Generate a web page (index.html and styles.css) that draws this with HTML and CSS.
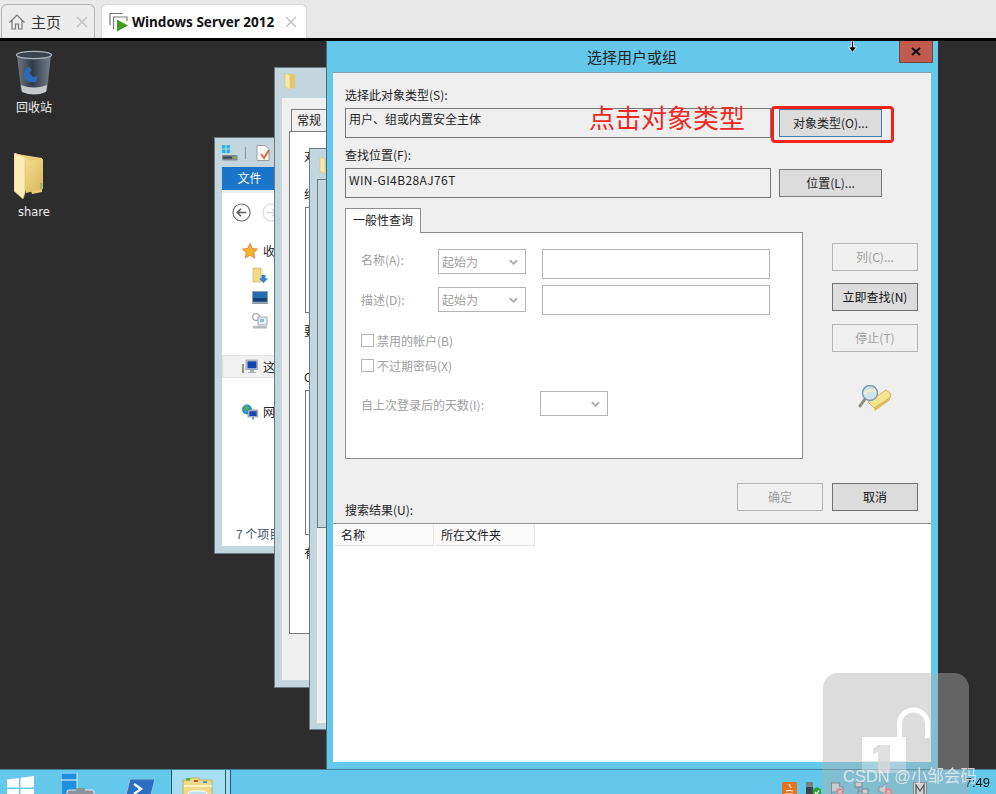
FILE: index.html
```html
<!DOCTYPE html>
<html lang="zh-CN">
<head>
<meta charset="utf-8">
<title>选择用户或组</title>
<link rel="stylesheet" href="styles.css">
</head>
<body>
<div class="screen">
  <header class="tabbar">
    <div class="tab tab-home">
      <svg class="home-icon" viewBox="0 0 18 18" width="18" height="18"><path d="M1.5 9.5 9 2l7.500 7.500M4 7.500V16h3.500v-5h3v5H14V7.500" fill="none" stroke="#777" stroke-width="1.200"/></svg>
      <span class="tab-home-label">主页</span>
      <svg class="tab-close" viewBox="0 0 14 14" width="14" height="14"><path d="M2 2l10 10M12 2 2 12" stroke="#c4c4c4" stroke-width="1.600"/></svg>
    </div>
    <div class="tab tab-active">
      <svg class="vm-icon" viewBox="0 0 20 20" width="20" height="20"><path d="M1 13V1.500h13M4.500 17V5h13.500v4" fill="none" stroke="#777" stroke-width="1.200"/><path d="M8 7.500 19 13.500 8 19.500z" fill="#3f9c1f"/></svg>
      <span class="tab-title">Windows Server 2012</span>
      <svg class="tab-close" viewBox="0 0 14 14" width="14" height="14"><path d="M2 2l10 10M12 2 2 12" stroke="#c4c4c4" stroke-width="1.600"/></svg>
    </div>
  </header>

  <main class="desktop">
    <div class="desk-icon desk-bin">
      <svg viewBox="0 0 36 46" width="36" height="46">
        <defs><linearGradient id="binBody" x1="0" y1="0" x2="1" y2="0"><stop offset="0" stop-color="#6d7882"/><stop offset=".45" stop-color="#2f3b47"/><stop offset="1" stop-color="#75808a"/></linearGradient></defs>
        <path d="M1 5 5 41q13 6 26 0L35 5z" fill="url(#binBody)"/>
        <path d="M5 35q13 5 26 0l-1 7q-12 5-24 0z" fill="#c6c8ca"/>
        <ellipse cx="18" cy="5" rx="17.500" ry="3.600" fill="#39444e" stroke="#aeb6bc" stroke-width="1.200"/>
        <path d="M8 25q1-8 5-8l3 3-3 3 4 4 5-1-2 6h-7q-5-2-5-7z" fill="#2f68b8"/>
      </svg>
      <span class="desk-label">回收站</span>
    </div>
    <div class="desk-icon desk-share">
      <svg class="share-folder" viewBox="0 0 32 46" width="32" height="46">
        <defs><linearGradient id="fBack" x1="0" y1="0" x2="1" y2="1"><stop offset="0" stop-color="#fbeaa6"/><stop offset="1" stop-color="#d9b659"/></linearGradient></defs>
        <path d="M3 1 28 5v34l-10 2z" fill="#e8cd78"/>
        <path d="M1 0 11 4q3 1 4 4l14-2v30L12 40z" fill="url(#fBack)"/>
        <path d="M0 0 10 3.500q1 0 1 2V40l-2 6-9-8z" fill="#fbeeb4" stroke="#d8bd6e" stroke-width=".6"/>
        <rect x="26" y="30" width="2.500" height="6" fill="#9fb46a"/>
      </svg>
      <span class="desk-label desk-label-latin">share</span>
    </div>

    <section class="win win-explorer">
      <div class="exp-title">
        <svg viewBox="0 0 16 16" width="16" height="16"><path d="M0 0h3.500v3.500H0zM4.500 0H8v3.500H4.500zM0 4.500h3.500V8H0zM4.500 4.500H8V8H4.500z" fill="#2ab4ea"/><rect y="10" width="15.500" height="5.500" rx="1" fill="#7e8a90"/><rect x="1" y="11.500" width="9" height="2.200" fill="#3f4a50"/><rect x="11.500" y="11.500" width="3" height="2.200" fill="#79bd3a"/></svg>
        <span class="exp-sep"></span>
        <svg class="exp-doc" viewBox="0 0 14 16" width="14" height="16"><path d="M1 .5h8l4 4v11H1z" fill="#fbfbfb" stroke="#8b8b8b" stroke-width=".8"/><path d="m5 9 3 4 5-8" fill="none" stroke="#dd6a40" stroke-width="2"/></svg>
      </div>
      <div class="exp-file">文件</div>
      <div class="exp-content">
        <div class="exp-nav">
          <svg viewBox="0 0 20 20" width="19" height="19"><circle cx="10" cy="10" r="9" fill="none" stroke="#6a6a6a" stroke-width="1.200"/><path d="M15 10H6m3.500-4L5.500 10l4 4" fill="none" stroke="#5c5c5c" stroke-width="1.700"/></svg>
          <svg viewBox="0 0 20 20" width="19" height="19"><circle cx="10" cy="10" r="9" fill="none" stroke="#d8d8d8" stroke-width="1.200"/><path d="M5 10h9m-3.500-4 4 4-4 4" fill="none" stroke="#d8d8d8" stroke-width="1.700"/></svg>
        </div>
        <div class="exp-row exp-fav">
          <svg viewBox="0 0 16 16" width="16" height="16"><path d="m8 .5 2.300 5 5.200.6-3.800 3.600 1 5.300L8 12.300 3.300 15l1-5.300L.5 6.100l5.200-.6z" fill="#f5b32e" stroke="#d9752a" stroke-width=".8"/></svg>
          <span class="exp-text">收</span>
        </div>
        <div class="exp-sub exp-sub-first">
          <svg viewBox="0 0 16 16" width="16" height="16"><path d="M1 1h8v14H1z" fill="#f0d987" stroke="#c9ad5b" stroke-width=".6"/><path d="M9 2h2v6H9z" fill="#f5e5a4"/><path d="M9.500 8h4v3.500H16L11.500 16 7 11.500h2.500z" fill="#2f7fd3"/></svg>
        </div>
        <div class="exp-sub">
          <svg viewBox="0 0 16 13" width="16" height="13"><rect width="16" height="13" fill="#8fa0ad"/><rect x="1" y="1" width="14" height="9.500" fill="#2a6cb4"/><rect x="1" y="7" width="14" height="3.500" fill="#163f78"/></svg>
        </div>
        <div class="exp-sub">
          <svg viewBox="0 0 16 16" width="16" height="16"><circle cx="4" cy="4" r="3.500" fill="#fff" stroke="#8c8c8c"/><rect x="6" y="4" width="9" height="8" fill="#e6eef2" stroke="#8c9aa2" stroke-width=".8"/><rect x="8" y="6" width="4" height="3" fill="#8dc0dd"/><rect x="1" y="13" width="14" height="2.500" fill="#b7bec2"/></svg>
        </div>
        <div class="exp-row exp-pc">
          <svg viewBox="0 0 16 16" width="16" height="16"><rect x="4" y="1" width="12" height="9.500" fill="#c7ced4" stroke="#7d8a92" stroke-width=".6"/><rect x="5.500" y="2.300" width="9" height="7" fill="#1345b4"/><path d="M8 11h4v2h2v1H6v-1h2z" fill="#aab3b8"/><rect y="5" width="2" height="9" fill="#8a9a7a"/></svg>
          <span class="exp-text">这</span>
        </div>
        <div class="exp-row exp-net">
          <svg viewBox="0 0 16 16" width="16" height="16"><circle cx="5" cy="5.500" r="5" fill="#2b93d6"/><path d="M2 3q3-2 5 0l-1 3-3 2z" fill="#57b04a"/><rect x="6" y="6" width="10" height="7" fill="#c2ccd2" stroke="#69767e" stroke-width=".6"/><rect x="7.300" y="7.200" width="7.400" height="4.800" fill="#1747b4"/><rect x="10" y="13" width="2" height="2.500" fill="#8d979d"/></svg>
          <span class="exp-text">网</span>
        </div>
        <div class="exp-status">7 个项目</div>
      </div>
    </section>

    <section class="win win-props">
      <svg class="win-folder" viewBox="0 0 14 18" width="14" height="18"><path d="M2 1h9v14H4z" fill="#e3c66f"/><path d="M1 0l5 2v15l-5-3z" fill="#f9e9a6" stroke="#d3b868" stroke-width=".5"/></svg>
      <div class="props-body">
        <div class="props-tab">常规</div>
        <div class="props-pane">
          <p class="props-frag props-a">对</p>
          <p class="props-frag props-b">组</p>
          <div class="props-box props-box1"></div>
          <p class="props-frag props-c">要</p>
          <p class="props-frag props-d">C</p>
          <div class="props-box props-box2"></div>
          <p class="props-frag props-e">有</p>
        </div>
      </div>
    </section>

    <section class="win win-perm">
      <svg class="win-folder win-folder-perm" viewBox="0 0 14 18" width="14" height="18"><path d="M1 0l5 2v15l-5-3z" fill="#f9e9a6" stroke="#d3b868" stroke-width=".5"/></svg>
      <div class="perm-nest"></div>
      <div class="perm-foot"></div>
    </section>

    <section class="win-dialog">
      <div class="dlg-titlebar">
        <span class="dlg-title">选择用户或组</span>
        <div class="dlg-close">
          <svg viewBox="0 0 10 9" width="10" height="9"><path d="M1 1l8 7M9 1 1 8" stroke="#111" stroke-width="2.200"/></svg>
        </div>
      </div>
      <div class="dlg-body">
        <div class="dlg-fields">
          <label class="fld-label">选择此对象类型(S):</label>
          <div class="readonly-box">用户、组或内置安全主体</div>
          <button class="btn btn-focus">对象类型(O)...</button>
          <label class="fld-label fld-label-second">查找位置(F):</label>
          <div class="readonly-box readonly-host">WIN-GI4B28AJ76T</div>
          <button class="btn">位置(L)...</button>
        </div>

        <div class="dlg-middle">
          <div class="query">
            <div class="query-tab">一般性查询</div>
            <div class="query-panel">
              <div class="q-row">
                <span class="q-label">名称(A):</span>
                <div class="combo"><span>起始为</span><svg class="chev" viewBox="0 0 10 7" width="9" height="7"><path d="m1 1 4 4 4-4" fill="none" stroke="#aaa" stroke-width="2"/></svg></div>
                <div class="q-input"></div>
              </div>
              <div class="q-row q-row-second">
                <span class="q-label q-label-tall">描述(D):</span>
                <div class="combo combo-low"><span>起始为</span><svg class="chev" viewBox="0 0 10 7" width="9" height="7"><path d="m1 1 4 4 4-4" fill="none" stroke="#aaa" stroke-width="2"/></svg></div>
                <div class="q-input"></div>
              </div>
              <div class="q-check q-check-first"><span class="checkbox"></span><span>禁用的帐户(B)</span></div>
              <div class="q-check"><span class="checkbox"></span><span>不过期密码(X)</span></div>
              <div class="q-days">
                <span class="q-days-label">自上次登录后的天数(I):</span>
                <div class="combo combo-small"><svg class="chev" viewBox="0 0 10 7" width="9" height="7"><path d="m1 1 4 4 4-4" fill="none" stroke="#aaa" stroke-width="2"/></svg></div>
              </div>
            </div>
          </div>
          <div class="side">
            <button class="btn btn-side btn-disabled">列(C)...</button>
            <button class="btn btn-side btn-primary">立即查找(N)</button>
            <button class="btn btn-side btn-disabled btn-stop">停止(T)</button>
            <svg class="search-icon" viewBox="0 0 34 26" width="34" height="26">
              <path d="M10 17 28 5l5 4-1 4-16 10z" fill="#f4e38f" stroke="#c4a84f" stroke-width=".8"/>
              <path d="M16 23 32 12v3L17 26z" fill="#d8bc5c"/>
              <path d="M7 14 2 21" stroke="#8a8a80" stroke-width="3" stroke-linecap="round"/>
              <circle cx="12" cy="8" r="7.500" fill="#cfe3ea" stroke="#7e98a6" stroke-width="1.400"/>
              <path d="M6 9q6-6 12-2" fill="none" stroke="#f4f0d0" stroke-width="2"/>
            </svg>
          </div>
        </div>

        <div class="dlg-actions">
          <label class="fld-label results-label">搜索结果(U):</label>
          <button class="btn btn-side btn-disabled">确定</button>
          <button class="btn btn-side btn-primary">取消</button>
        </div>

        <div class="results">
          <div class="results-head">
            <span class="col">名称</span>
            <span class="col">所在文件夹</span>
          </div>
        </div>
      </div>

      <div class="note">点击对象类型</div>
      <div class="note-box"></div>
    </section>

    <svg class="cursor" viewBox="0 0 9 12" width="9" height="12"><path d="M3.500 0h2v6h3L4.500 11.500.5 6h3z" fill="#000" stroke="#fff" stroke-width=".8"/></svg>
  </main>

  <footer class="taskbar">
    <svg class="tb-win" viewBox="0 0 28 20" width="28" height="20"><path d="M0 3.500 12 2v9.500H0zM13.500 1.800 27 0v11.500H13.500zM0 13h12v7H0zM13.500 13H27v7H13.500z" fill="#fff"/></svg>
    <svg class="tb-server" viewBox="0 0 34 23" width="34" height="23"><rect x="0" y="0" width="16" height="23" fill="#1f8ede" stroke="#fff" stroke-width=".8"/><path d="M0 7h16" stroke="#fff"/><rect x="6" y="17" width="27" height="8" rx="2" fill="#8b949a" stroke="#e4e8ea"/><rect x="15" y="15" width="9" height="3" fill="#8b949a"/></svg>
    <svg class="tb-ps" viewBox="0 0 30 18" width="30" height="18"><path d="M5 0h25l-5 20H0z" fill="#2a6fc0" stroke="#9bc7e6"/><path d="m9 5 7 5-7 5" fill="none" stroke="#fff" stroke-width="2.400"/></svg>
    <div class="tb-active">
      <svg viewBox="0 0 32 20" width="32" height="20"><path d="M1 4h7l1-2h8l1 2h12v18H1z" fill="#f1d98c" stroke="#c8ad5e"/><rect x="4" y="2" width="4" height="2.500" fill="#4bb04a"/><rect x="12" y="4" width="4" height="2" fill="#c9502f"/><rect x="21" y="5" width="4" height="2" fill="#4aa0c4"/><path d="M2 10h28" stroke="#fbf0c2" stroke-width="2"/><path d="M5 20q2-5 5-5h12q3 0 3 5" fill="#bfe0ee" stroke="#fff"/></svg>
    </div>
    <div class="tb-slice"></div>
    <div class="tray">
      <svg viewBox="0 0 15 14" width="15" height="14"><rect width="15" height="14" rx="1.500" fill="#e8721d"/><path d="M4 9q4-1 7 0M3.500 12h8M7 2l2 4" fill="none" stroke="#fff" stroke-width="1.200"/></svg>
      <svg viewBox="0 0 15 14" width="15" height="14"><rect x="0" y="0" width="7" height="5" fill="#7a7f85"/><rect y="5" width="7" height="9" fill="#3c4248"/><circle cx="11" cy="10" r="4.500" fill="#2ba02f"/><path d="m8.800 10 1.700 1.800 2.700-3.400" fill="none" stroke="#fff" stroke-width="1.200"/></svg>
      <svg viewBox="0 0 15 14" width="15" height="14"><path d="M1.500 0v14M2 1h8l-1 3 4 1v5H2" fill="#dfe4e8" stroke="#65727a"/><circle cx="10" cy="10" r="4" fill="#ec7a80"/><path d="m8.500 8.500 3 3m0-3-3 3" stroke="#fff"/></svg>
      <svg viewBox="0 0 15 14" width="15" height="14"><rect x="1" y="0" width="7" height="5" fill="#dfe8ec" stroke="#59676f"/><rect x="8" y="7" width="6" height="5" fill="#dfe8ec" stroke="#59676f"/><path d="M4 5v8M4 9h4" stroke="#59676f"/></svg>
      <svg class="tray-speaker" viewBox="0 0 15 14" width="15" height="14"><path d="M1 5h3l4-4v13L4 10H1z" fill="#dfe4e8" stroke="#65727a" stroke-width=".8"/><circle cx="10.500" cy="10" r="4" fill="#ec7a80"/><path d="m9 8.500 3 3m0-3-3 3" stroke="#fff"/></svg>
      <svg class="tray-m" viewBox="0 0 14 14" width="14" height="14"><rect x=".5" y=".5" width="13" height="14" fill="#e6eef0" stroke="#6f787c"/><path d="M3 14V3l4 6 4-6v11" fill="none" stroke="#222" stroke-width="1.300"/></svg>
      <span class="tray-time">7:49</span>
    </div>
  </footer>

  <div class="watermark">
    <svg class="wm-lock" viewBox="0 0 70 88" width="70" height="88">
      <path d="M38.500 32V18a14 14 0 0 1 28 0V32" fill="none" stroke="#fff" stroke-width="5"/>
      <rect x="1" y="31" width="44" height="24" fill="#fff"/>
      <rect x="1" y="55" width="44" height="12" fill="#fff" fill-opacity=".3"/>
      <path d="M17 39h12v28H17V46l-5 2v-5z" fill="#d8d8d8" fill-opacity=".8"/>
    </svg>
  </div>
  <div class="wm-text">CSDN @小邹会码</div>
</div>
</body>
</html>
```

FILE: styles.css
```css
* { box-sizing: border-box; }
html, body { margin: 0; padding: 0; height: 100%; overflow: hidden; }
body { font-family: "Noto Sans CJK SC", "Noto Sans", sans-serif; font-size: 12px; color: #222; }
p { margin: 0; }
svg { display: block; flex: none; }

.screen { position: relative; width: 996px; height: 794px; display: flex; flex-direction: column; overflow: hidden; filter: blur(.3px); }

/* browser-like tab bar */
.tabbar { height: 41px; flex: none; display: flex; align-items: flex-end; gap: 6px; padding: 4px 0 0 1px; background: #e8e8e8; border-bottom: 3px solid #000; }
.tab { height: 34px; display: flex; align-items: center; border: 1px solid #b4b4b4; border-bottom: 0; border-radius: 6px 6px 0 0; }
.tab-home { width: 94px; padding-left: 6px; background: #ececec; }
.tab-home-label { margin-left: 5px; font-size: 15px; line-height: 20px; color: #333; }
.tab-home .tab-close { margin-left: 14px; }
.tab-active { width: 206px; padding-left: 7px; background: #fff; border-color: #d8d8d8; }
.tab-title { margin-left: 3px; font-family: "Noto Sans", sans-serif; font-weight: 700; font-size: 13.500px; color: #111; white-space: nowrap; }
.tab-active .tab-close { margin-left: 10px; }

/* desktop */
.desktop { position: relative; flex: 1; background: #2d2d2d; }
.desk-icon { position: absolute; display: flex; flex-direction: column; align-items: center; width: 60px; color: #eee; }
.desk-bin { left: 4px; top: 9px; }
.desk-share { left: 4px; top: 112px; }
.share-folder { margin-right: 8px; }
.desk-label { margin-top: 3px; line-height: 16px; font-size: 12px; }
.desk-label-latin { margin-top: 5px; font-family: "DejaVu Sans", sans-serif; font-size: 11.500px; }

.win { position: absolute; background: #c4d6dd; border: 1px solid #6c7a82; overflow: hidden; }
.win-explorer { left: 214px; top: 96px; width: 62px; height: 417px; padding: 0 0 7px 7px; display: flex; flex-direction: column; }
.exp-title { height: 29px; display: flex; align-items: center; gap: 7px; flex: none; }
.exp-sep { width: 1px; height: 12px; background: #88979e; }
.exp-doc { margin-left: 3px; }
.exp-file { width: 52px; height: 23px; flex: none; padding-left: 3px; background: #1a74c8; color: #fff; line-height: 22px; text-align: center; font-size: 12px; }
.exp-content { flex: 1; background: #fff; border-top: 3px solid #f0f0f0; overflow: hidden; }
.exp-nav { display: flex; gap: 11px; margin: 10px 0 0 10px; }
.exp-row { display: flex; align-items: center; color: #222; }
.exp-fav { margin: 21px 0 0 20px; }
.exp-text { margin-left: 5px; font-size: 12px; line-height: 16px; }
.exp-sub { margin-left: 30px; height: 23px; display: flex; align-items: center; }
.exp-sub-first { margin-top: 4px; }
.exp-pc { margin: 23px 0 0 0; height: 23px; padding-left: 19px; background: #f1f1f1; border: 1px solid #e1e1e1; border-right: 0; }
.exp-net { margin: 26px 0 0 20px; }
.exp-status { margin: 106px 0 0 14px; white-space: nowrap; color: #3f5668; font-size: 12px; line-height: 16px; }

.win-props { left: 274px; top: 26px; width: 60px; height: 621px; padding: 30px 0 7px 7px; }
.win-folder { position: absolute; left: 9px; top: 5px; }
.props-body { height: 100%; background: #efefef; padding: 11px 0 0 7px; }
.props-tab { width: 40px; height: 23px; margin-left: 2px; padding-left: 5px; background: #f0f0f0; border: 1px solid #7a7a7a; border-bottom: 0; line-height: 20px; }
.props-pane { position: relative; height: 503px; background: #fff; border: 1px solid #7a7a7a; margin-top: -1px; }
.props-frag { position: absolute; left: 14px; line-height: 16px; }
.props-a { top: 16px; }
.props-b { top: 54px; }
.props-c { top: 191px; }
.props-d { top: 237px; }
.props-e { top: 413px; }
.props-box { position: absolute; left: 15px; width: 40px; border: 1px solid #7a7a7a; }
.props-box1 { top: 75px; height: 106px; }
.props-box2 { top: 258px; height: 145px; }

.win-perm { left: 309px; top: 107px; width: 20px; height: 582px; padding-top: 30px; }
.win-folder-perm { left: 9px; top: 8px; }
.perm-nest { margin-left: 7px; height: 349px; background: #c4d6dd; border: 1px solid #6c7a82; }
.perm-foot { margin-left: 7px; height: 195px; background: #efefef; }

/* main dialog */
.win-dialog { position: absolute; left: 326px; top: 0; width: 612px; height: 728px; background: #63c8ea; padding: 0 7px 7px 6px; display: flex; flex-direction: column; border-left: 1px solid #4a6a78; }
.dlg-titlebar { position: relative; height: 31px; flex: none; display: flex; justify-content: center; align-items: center; }
.dlg-title { font-size: 15px; color: #222; }
.dlg-close { position: absolute; right: -2px; top: 0; width: 34px; height: 22px; background: #c15b50; border: 1px solid #6f4a45; border-top: 0; display: flex; align-items: center; justify-content: center; }
.dlg-body { flex: 1; display: flex; flex-direction: column; background: #efefef; border-top: 1px solid #8e9ea6; }

.dlg-fields { display: grid; grid-template-columns: 426px 103px; column-gap: 8px; padding: 14px 0 0 12px; }
.fld-label { grid-column: 1 / 3; height: 16px; line-height: 16px; color: #222; }
.fld-label-second { margin-top: 9px; }
.readonly-box { height: 30px; margin-top: 5px; padding: 2px 3px; border: 1px solid #777; line-height: 16px; color: #222; }
.readonly-host { padding-top: 3px; letter-spacing: .4px; }
.btn { font: inherit; color: #222; background: #dcdcdc; border: 1px solid #777; height: 28px; padding: 0 0 2px; text-align: center; }
.dlg-fields .btn { margin-top: 6px; }
.btn-focus { border-color: #3c7fb1; }

.dlg-middle { display: flex; gap: 29px; margin: 10px 0 0 12px; }
.query { width: 458px; }
.query-tab { position: relative; z-index: 1; width: 76px; height: 25px; background: #fff; border: 1px solid #8e8e8e; border-bottom: 0; text-align: center; line-height: 22px; }
.query-panel { height: 227px; margin-top: -1px; background: #fff; border: 1px solid #8e8e8e; padding: 16px 0 0 15px; color: #a0a0a0; }
.q-row { display: flex; align-items: flex-start; }
.q-row-second { margin-top: 6px; }
.q-label { width: 77px; line-height: 22px; }
.q-label-tall { line-height: 30px; }
.combo { width: 88px; height: 25px; padding: 0 7px 1px 3px; display: flex; align-items: center; justify-content: space-between; border: 1px solid #b4b4b4; background: #fff; }
.chev { margin-top: 2px; }
.combo-low { margin-top: 2px; }
.q-input { width: 228px; height: 30px; margin-left: 16px; border: 1px solid #b4b4b4; background: #fff; }
.q-check { display: flex; align-items: center; gap: 3px; height: 13px; margin-top: 12px; }
.q-check-first { margin-top: 19px; }
.checkbox { width: 13px; height: 13px; border: 1px solid #b4b4b4; background: #fff; }
.q-days { display: flex; margin-top: 19px; }
.q-days-label { width: 179px; line-height: 27px; }
.combo-small { width: 68px; justify-content: flex-end; }

.side { display: flex; flex-direction: column; gap: 12px; margin-top: 35px; width: 86px; }
.btn-side { width: 86px; height: 28px; }
.btn-disabled { background: #efefef; border-color: #b4b4b4; color: #a0a0a0; }
.btn-primary { background: #dcdcdc; border-color: #707070; color: #111; }
.btn-stop { margin-top: 1px; }
.search-icon { margin: 21px 0 0 26px; }

.dlg-actions { display: flex; align-items: flex-start; gap: 9px; height: 40px; margin-top: 24px; padding: 0 13px 0 12px; }
.results-label { margin-right: auto; align-self: flex-end; margin-bottom: 5px; }
.results { flex: 1; background: #fff; border-top: 1px solid #8e8e8e; padding: 1px 0 0 2px; }
.results-head { display: flex; gap: 1px; height: 21px; }
.col { width: 99px; padding-left: 6px; background: #fafafa; border-bottom: 1px solid #e3e3e3; border-right: 1px solid #e8e8e8; line-height: 20px; }
.col + .col { width: 100px; }

.note { position: absolute; left: 262px; top: 59px; font-size: 26px; line-height: 34px; color: #ee2a24; white-space: nowrap; }
.note-box { position: absolute; left: 444px; top: 65px; width: 123px; height: 37px; border: 3px solid #f5221b; border-radius: 4px; }
.cursor { position: absolute; left: 848px; top: 0; }

/* taskbar */
.taskbar { height: 25px; flex: none; display: flex; align-items: flex-start; background: #63c8ea; border-top: 1px solid #3f7f98; overflow: hidden; }
.tb-win { margin: 6px 0 0 7px; }
.tb-server { margin: 3px 0 0 26px; }
.tb-ps { margin: 9px 0 0 30px; }
.tb-active { width: 55px; height: 25px; margin-left: 16px; padding: 6px 0 0 10px; background: #a5ddf2; border-left: 1px solid #27566b; border-right: 1px solid #27566b; }
.tb-slice { width: 5px; height: 25px; background: #a5ddf2; border-right: 1px solid #27566b; }
.tray { margin-left: auto; padding: 12px 6px 0 0; display: flex; gap: 9px; align-items: flex-start; }
.tray-m { margin-left: 11px; }
.tray-time { margin: -9px 0 0 29px; font-family: "Liberation Sans", sans-serif; font-size: 13px; line-height: 20px; color: #111; }

/* watermark */
.watermark { position: absolute; left: 823px; top: 673px; width: 146px; height: 135px; border-radius: 15px; background: rgba(173, 173, 173, .43); overflow: hidden; }
.wm-lock { position: absolute; left: 38px; top: 33px; }
.wm-text { position: absolute; left: 843px; top: 766px; font-family: "Liberation Sans", "Noto Sans CJK SC", sans-serif; font-size: 16.500px; line-height: 20px; color: rgba(235, 235, 235, .85); white-space: nowrap; }
```
